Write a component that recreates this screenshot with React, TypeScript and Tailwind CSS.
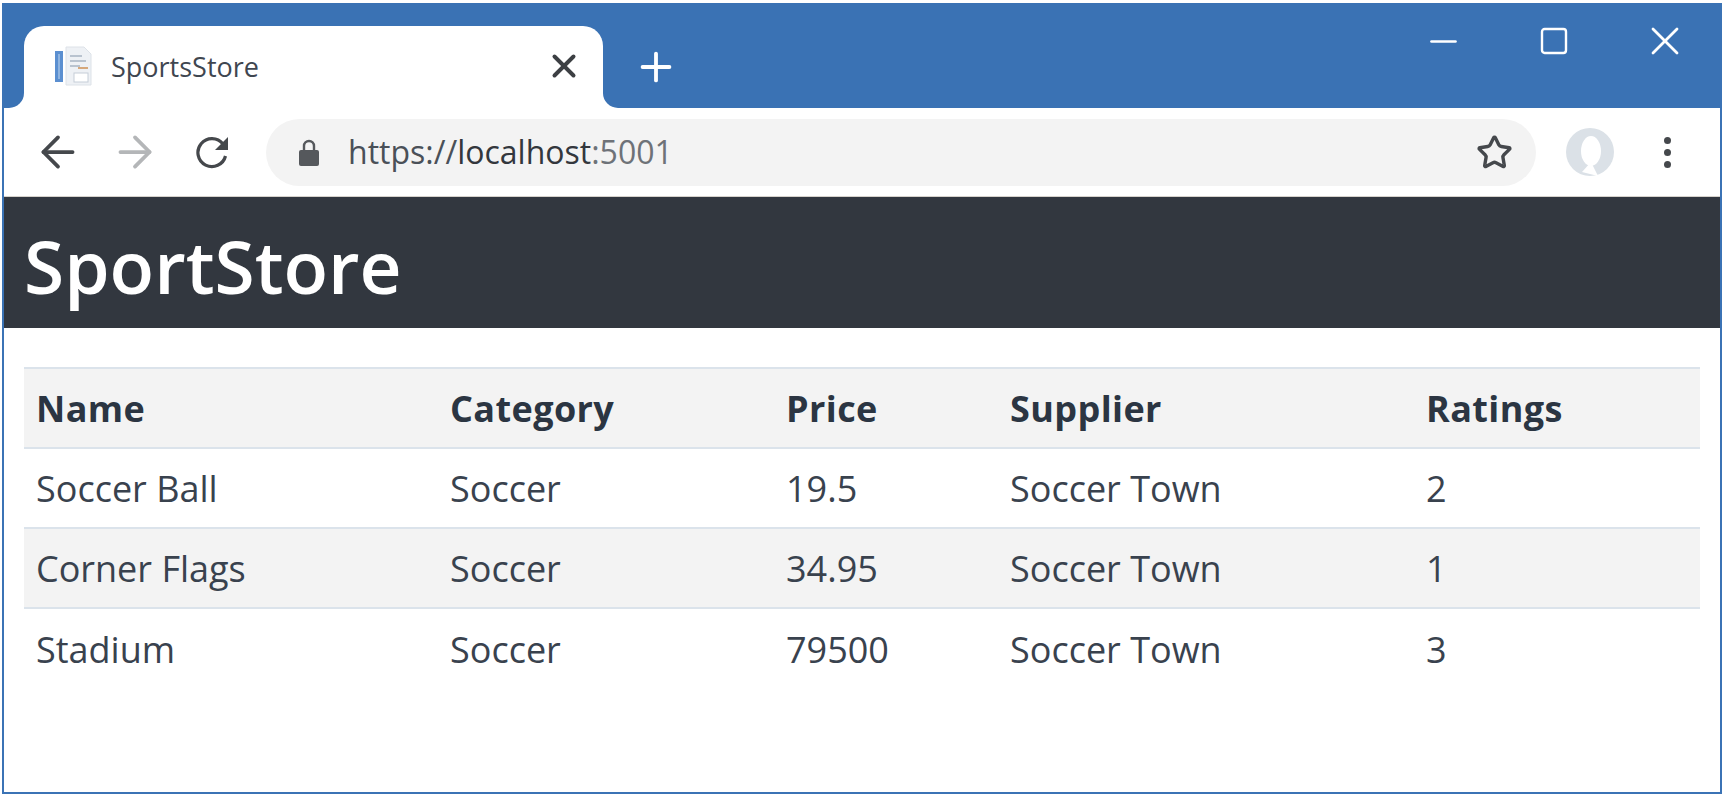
import React from 'react';
import { ArrowLeft, ArrowRight, Minus, Plus, Square, Star, X } from 'lucide-react';

const rows = [
  { name: 'Soccer Ball', category: 'Soccer', price: '19.5', supplier: 'Soccer Town', ratings: '2' },
  { name: 'Corner Flags', category: 'Soccer', price: '34.95', supplier: 'Soccer Town', ratings: '1' },
  { name: 'Stadium', category: 'Soccer', price: '79500', supplier: 'Soccer Town', ratings: '3' },
];

function Favicon() {
  return (
    <svg width="38" height="40" viewBox="0 0 38 40" className="shrink-0">
      <path d="M12 1h18l7 7v31H12z" fill="#eef1f5" stroke="#dde2e8" />
      <rect x="1" y="5" width="8" height="31" fill="#5b8fd0" />
      <rect x="4" y="8" width="2" height="25" fill="#8fb4e0" />
      <path d="M16 10h12M16 15h16M16 20h10" stroke="#b9c3cf" strokeWidth="2" />
      <path d="M24 22h10" stroke="#d6a87c" strokeWidth="2" />
      <rect x="20" y="27" width="14" height="9" fill="#fff" stroke="#c5ced8" />
    </svg>
  );
}

function Reload() {
  return (
    <svg width="36" height="34" viewBox="0 0 36 34" fill="none" className="shrink-0">
      <path d="M28 9a14 14 0 1 0 2.5 12" stroke="#45484c" strokeWidth="3.2" />
      <path d="M33 2v13H20z" fill="#45484c" />
    </svg>
  );
}

function Lock() {
  return (
    <svg width="20" height="27" viewBox="0 0 20 27" className="shrink-0">
      <path d="M5 12V7a5 5 0 0 1 10 0v5" fill="none" stroke="#55585c" strokeWidth="2.4" />
      <rect x="0" y="11" width="20" height="16" rx="2" fill="#55585c" />
    </svg>
  );
}

function Avatar() {
  return (
    <svg width="48" height="48" viewBox="0 0 48 48" className="shrink-0">
      <circle cx="24" cy="24" r="24" fill="#dbe1e7" />
      <ellipse cx="25" cy="23" rx="10" ry="15" fill="#fff" />
      <path d="M16 44l9-10 7 14z" fill="#fff" />
    </svg>
  );
}

export default function App() {
  return (
    <div className="w-[1725px] h-[796px] bg-white pt-[3px] pl-[2px] pr-[3px] pb-[2px] font-['Open_Sans',sans-serif] overflow-hidden">
      <div className="h-full flex flex-col border-[2px] border-t-0 border-[#3b73b5] bg-white">
        {/* Tab strip */}
        <div className="h-[105px] shrink-0 bg-[#3a72b4] flex pl-[20px]">
          <div className="relative mt-[23px] w-[579px] h-[82px] bg-white rounded-t-[20px] flex items-center pl-[30px] pr-[20px] pb-[2px]">
            <div className="absolute left-[-20px] bottom-0 w-[20px] h-[15px] bg-white">
              <div className="w-full h-full bg-[#3a72b4] rounded-br-[18px]" />
            </div>
            <div className="absolute right-[-20px] bottom-0 w-[20px] h-[15px] bg-white">
              <div className="w-full h-full bg-[#3a72b4] rounded-bl-[18px]" />
            </div>
            <Favicon />
            <span className="ml-[19px] text-[27px] text-[#3f4650] leading-none">SportsStore</span>
            <X className="ml-auto text-[#3c3f43]" size={38} strokeWidth={2.5} />
          </div>
          <Plus className="ml-[30px] mt-[41px] text-white" size={46} strokeWidth={2} />
          <div className="ml-auto mt-[14px] h-[48px] flex items-center text-white pr-[31px]">
            <Minus size={41} strokeWidth={1.6} />
            <Square className="ml-[74px]" size={32} strokeWidth={1.8} />
            <X className="ml-[71px]" size={48} strokeWidth={1.4} />
          </div>
        </div>

        {/* Toolbar */}
        <div className="h-[89px] shrink-0 flex items-center pl-[29px] border-b border-[#d6d2cc] bg-white">
          <ArrowLeft className="text-[#45484c]" size={50} strokeWidth={1.8} />
          <ArrowRight className="ml-[27px] text-[#b4b6b8]" size={50} strokeWidth={1.8} />
          <div className="ml-[35px]"><Reload /></div>
          <div className="ml-[35px] w-[1270px] h-[67px] rounded-full bg-[#f3f3f3] flex items-center pl-[33px] pr-[23px]">
            <Lock />
            <span className="ml-[29px] text-[32px] leading-none text-[#4a5058]">
              https://<span className="text-[#33373d]">localhost</span><span className="text-[#6e7278]">:5001</span>
            </span>
            <Star className="ml-auto text-[#45484c]" size={37} strokeWidth={2.2} />
          </div>
          <div className="ml-[30px]"><Avatar /></div>
          <div className="ml-[50px] flex flex-col gap-[5px]">
            <span className="w-[7px] h-[7px] rounded-full bg-[#45484c]" />
            <span className="w-[7px] h-[7px] rounded-full bg-[#45484c]" />
            <span className="w-[7px] h-[7px] rounded-full bg-[#45484c]" />
          </div>
        </div>

        {/* Page header */}
        <div className="h-[131px] shrink-0 bg-[#32373f] flex items-center pl-[20px] pt-[6px]">
          <h1 className="text-[73px] leading-none font-semibold text-white">SportStore</h1>
        </div>

        {/* Table */}
        <div className="px-[20px] pt-[39px]">
          <table className="w-[1676px] table-fixed border-collapse text-[36px] text-[#39424e]">
            <colgroup>
              <col className="w-[414px]" />
              <col className="w-[336px]" />
              <col className="w-[224px]" />
              <col className="w-[416px]" />
              <col />
            </colgroup>
            <thead>
              <tr className="h-[80px] bg-[#f3f3f3] border-y-2 border-[#dbe3eb] text-[#2b3542] tracking-[0.4px]">
                <th className="px-[12px] pt-[2px] text-left font-bold">Name</th>
                <th className="px-[12px] pt-[2px] text-left font-bold">Category</th>
                <th className="px-[12px] pt-[2px] text-left font-bold">Price</th>
                <th className="px-[12px] pt-[2px] text-left font-bold">Supplier</th>
                <th className="px-[12px] pt-[2px] text-left font-bold">Ratings</th>
              </tr>
            </thead>
            <tbody>
              {rows.map((row, i) => (
                <tr key={row.name} className={`h-[80px] ${i === 1 ? 'bg-[#f3f3f3] border-b-2 border-[#dbe3eb]' : i === 0 ? 'border-b-2 border-[#dbe3eb]' : ''}`}>
                  <td className="px-[12px] pt-[2px]">{row.name}</td>
                  <td className="px-[12px] pt-[2px]">{row.category}</td>
                  <td className="px-[12px] pt-[2px]">{row.price}</td>
                  <td className="px-[12px] pt-[2px]">{row.supplier}</td>
                  <td className="px-[12px] pt-[2px]">{row.ratings}</td>
                </tr>
              ))}
            </tbody>
          </table>
        </div>
      </div>
    </div>
  );
}
